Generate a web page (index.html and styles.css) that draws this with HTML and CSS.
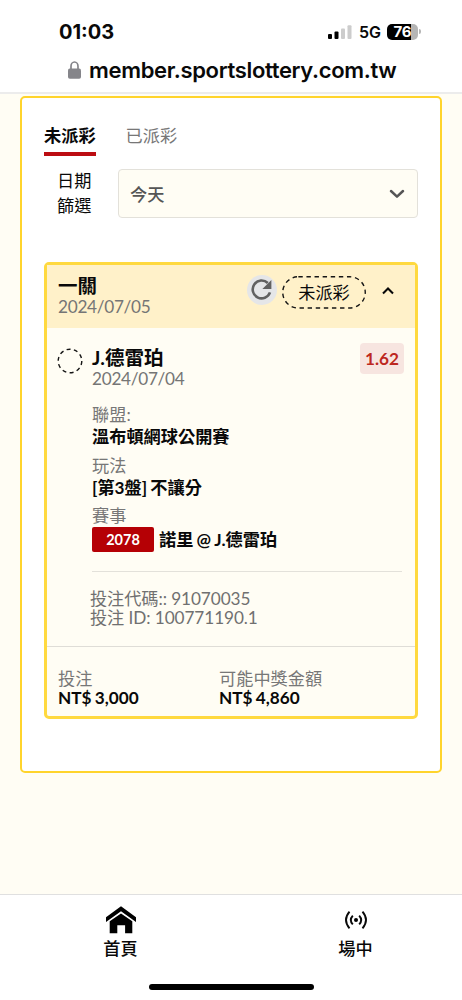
FILE: index.html
```html
<!DOCTYPE html>
<html lang="zh-Hant">
<head>
<meta charset="utf-8">
<meta name="viewport" content="width=device-width, initial-scale=1">
<title>投注紀錄</title>
<link rel="stylesheet" href="styles.css">
</head>
<body>
<header class="browser">
  <div class="status">
    <span class="time">01:03</span>
    <div class="status-right">
      <svg class="signal" width="24" height="16" viewBox="0 0 24 16"><rect x="0" y="10" width="4" height="5" rx="1"/><rect x="6.5" y="7.5" width="4" height="7.5" rx="1"/><rect class="off" x="13" y="4.5" width="4" height="10.5" rx="1"/><rect class="off" x="19.5" y="1.2" width="4" height="13.8" rx="1"/></svg>
      <span class="net">5G</span>
      <div class="battery"><span class="level">76</span><i class="cap"></i></div>
    </div>
  </div>
  <div class="address">
    <svg width="13" height="18" viewBox="0 0 13 18"><path class="shackle" d="M3 9V5.2a3.5 4.2 0 0 1 7 0V9"/><rect x="0" y="7.6" width="13" height="10.2" rx="1.8"/></svg>
    <span class="host">member.sportslottery.com.tw</span>
  </div>
</header>

<main class="page">
  <section class="panel">
    <nav class="tabs">
      <span class="tab active">未派彩</span>
      <span class="tab">已派彩</span>
    </nav>
    <div class="filter">
      <label class="filter-label">日期篩選</label>
      <div class="select"><span>今天</span>
        <svg width="16" height="10" viewBox="0 0 16 10"><path d="M2 2l6 5.6L14 2"/></svg>
      </div>
    </div>

    <article class="card">
      <header class="card-head">
        <div class="card-title">
          <h2>一關</h2>
          <p class="date">2024/07/05</p>
        </div>
        <span class="refresh"><svg width="22" height="22" viewBox="0 0 22 22"><path class="arc" d="M16.8 4A8.9 8.9 0 1 0 19 13.4"/><path class="tip" d="M20.4 1.1v9h-9z"/></svg></span>
        <span class="pill"><svg width="84" height="33" viewBox="0 0 84 33"><rect x=".75" y=".75" width="82.5" height="31.3" rx="15.6"/></svg><span>未派彩</span></span>
        <svg class="collapse" width="12" height="9" viewBox="0 0 12 9"><path d="M1 7.6l5-5 5 5"/></svg>
      </header>

      <div class="bet">
        <svg class="ring" width="26" height="26" viewBox="0 0 26 26"><circle cx="13" cy="13" r="11.8"/></svg>
        <div class="bet-body">
          <div class="pick">
            <div><h3>J.德雷珀</h3><p class="date">2024/07/04</p></div>
            <span class="odds">1.62</span>
          </div>
          <dl class="facts">
            <dt>聯盟:</dt><dd>溫布頓網球公開賽</dd>
            <dt>玩法</dt><dd>[第3盤] 不讓分</dd>
            <dt>賽事</dt><dd class="match"><span class="code">2078</span><span class="teams">諾里 @ J.德雷珀</span></dd>
          </dl>
          <div class="ids">
            <p>投注代碼:: 91070035</p>
            <p>投注 ID: 100771190.1</p>
          </div>
        </div>
      </div>

      <footer class="totals">
        <div><p>投注</p><strong>NT$ 3,000</strong></div>
        <div><p>可能中獎金額</p><strong>NT$ 4,860</strong></div>
      </footer>
    </article>
  </section>
</main>

<nav class="bottom">
  <div class="links">
    <a class="link"><svg width="32" height="28" viewBox="0 0 32 28"><path d="M1 11.3L16 .3l15 11v4.6L16 5.2 1 15.9z"/><path d="M4.7 15.2L16 7.4l11.3 7.8v12h-7.2v-8h-7.8v8H4.7z"/></svg><span>首頁</span></a>
    <a class="link"><svg class="live" width="24" height="28" viewBox="0 0 24 28"><circle cx="12" cy="14" r="2"/><path d="M8.8 9.6q-4 4.4 0 8.8M15.2 9.6q4 4.4 0 8.8M5.5 5.7q-7 8.3 0 16.6M18.5 5.7q7 8.3 0 16.6"/></svg><span>場中</span></a>
  </div>
  <div class="home-bar"></div>
</nav>
</body>
</html>
```

FILE: styles.css
```css
* { box-sizing: border-box; }
body {
  margin: 0;
  height: 1000px;
  display: flex;
  flex-direction: column;
  background: #fffdf4;
  color: #090909;
  font-family: Lato, "Noto Sans CJK TC", sans-serif;
  font-size: 17.2px;
}
h2, h3, p, dl, dd { margin: 0; }
svg { display: block; flex: none; }

.browser {
  height: 94px;
  background: #fff;
  border-bottom: 2px solid #ececec;
  font-family: Inter, sans-serif;
}
.status {
  height: 50px;
  padding: 13px 41px 0 59px;
  display: flex;
  justify-content: space-between;
  align-items: center;
}
.time { font-size: 20px; font-weight: 700; }
.status-right { display: flex; align-items: center; }
.signal { margin-right: 7px; }
.signal .off { fill: #ccc; }
.net { width: 28px; font-size: 16px; font-weight: 600; }
.battery { display: flex; align-items: center; gap: 1px; }
.level {
  width: 31px;
  height: 16px;
  border-radius: 5px;
  background: linear-gradient(90deg, #000 76%, #b5b5b5 76%);
  color: #fff;
  font-size: 15px;
  font-weight: 700;
  line-height: 16px;
  text-align: center;
}
.cap { width: 2px; height: 5px; border-radius: 0 2px 2px 0; background: #b5b5b5; }
.address {
  height: 40px;
  padding-left: 68px;
  display: flex;
  align-items: center;
  gap: 8px;
  fill: #85858a;
}
.shackle { fill: none; stroke: #85858a; stroke-width: 1.7; }
.host { font-size: 22px; font-weight: 600; white-space: nowrap; letter-spacing: -.33px; }

.page { flex: 1; padding: 2px 20px 0; }
.panel {
  height: 677px;
  padding: 25px 22px 0;
  border: 2px solid #ffd42c;
  border-radius: 5px;
  background: #fff;
}
.tabs { display: flex; gap: 30px; }
.tab { height: 33px; line-height: 26px; color: #777; }
.tab.active { color: #090909; font-weight: 700; border-bottom: 4px solid #bc0d12; }
.filter {
  margin-top: 13px;
  padding-left: 13px;
  display: flex;
  align-items: center;
  justify-content: space-between;
}
.filter-label { width: 35px; line-height: 24.5px; }
.select {
  width: 300px;
  height: 49px;
  padding: 0 12px 1px 11px;
  display: flex;
  align-items: center;
  justify-content: space-between;
  border: 1px solid #e3e1da;
  border-radius: 4px;
  background: #fffdf4;
  color: #555;
  font-weight: 500;
}
.select svg { margin-top: 1px; }
.select path { fill: none; stroke: #555; stroke-width: 2.5; stroke-linecap: round; stroke-linejoin: round; }

.card {
  height: 457px;
  margin-top: 44px;
  display: flex;
  flex-direction: column;
  border: 3px solid #ffd93f;
  border-radius: 5px;
  background: #fffdf4;
}
.card-head {
  height: 63px;
  padding: 10px 19px 0 11px;
  display: flex;
  align-items: flex-start;
  background: #fff1c9;
}
.card-title { width: 189px; }
h2, h3 { font-size: 19.5px; font-weight: 700; line-height: 21px; }
.date { color: #757575; line-height: 21px; letter-spacing: -.28px; }
.refresh {
  width: 30px;
  height: 30px;
  margin: 0 5px 0 0;
  border-radius: 50%;
  display: grid;
  place-items: center;
  background: #e5e6e8;
}
.arc { fill: none; stroke: #616161; stroke-width: 2.6; }
.tip { fill: #616161; }
.pill { display: grid; place-items: center; margin: 1px 16px 0 0; }
.pill > * { grid-area: 1 / 1; }
.pill > span { padding-top: 1px; line-height: 24px; }
.pill rect, .ring circle { fill: none; stroke: #151515; stroke-width: 1.4; }
.pill rect { stroke-dasharray: 4.4 3.7; }
.ring circle { stroke-dasharray: 4 3.4; }
.collapse { margin-top: 11px; }
.collapse path { fill: none; stroke: #080808; stroke-width: 2.1; }

.bet {
  height: 318px;
  padding: 19px 10px 0;
  display: flex;
  gap: 9px;
}
.bet-body { flex: 1; }
.ring { margin-top: 1px; }
.pick { display: flex; justify-content: space-between; align-items: flex-start; }
.odds {
  width: 44px;
  height: 31px;
  margin: -4px 1px 0 0;
  border-radius: 4px;
  background: #f7e5e0;
  color: #bd2720;
  font-weight: 700;
  line-height: 31px;
  text-align: center;
}
.facts { margin-top: 15px; word-spacing: -1px; }
.facts dt { height: 22px; line-height: 22px; color: #777; }
.facts dd { height: 20px; margin-bottom: 8.5px; line-height: 21px; font-weight: 700; }
.facts .match { height: 25px; margin: 0; display: flex; align-items: center; gap: 5px; }
.code {
  width: 62px;
  height: 25px;
  border-radius: 2px;
  background: #b50005;
  color: #fff;
  font-size: 14.5px;
  line-height: 25px;
  text-align: center;
}
.teams { line-height: 27px; }
.ids {
  width: 310px;
  margin-top: 19px;
  padding-top: 17px;
  border-top: 1px solid #e3e1da;
  color: #707070;
  line-height: 19px;
  letter-spacing: -.08px;
}
.ids p { margin-left: -2px; }
.totals {
  flex: 1;
  padding: 22px 11px 0;
  display: grid;
  grid-template-columns: 161px 1fr;
  border-top: 1px solid #dfddd7;
  color: #777;
  line-height: 19px;
}
.totals strong { display: block; color: #090909; word-spacing: -1px; }

.bottom { height: 106px; border-top: 1px solid #e0e0e0; background: #fff; }
.links { height: 89px; display: flex; justify-content: center; gap: 200px; padding-left: 14px; }
.link {
  width: 35px;
  padding-top: 11px;
  display: flex;
  flex-direction: column;
  align-items: center;
  font-weight: 500;
  line-height: 30px;
  white-space: nowrap;
}
.live path { fill: none; stroke: #090909; stroke-width: 1.9; }
.home-bar { width: 165px; height: 6px; margin: 0 auto; border-radius: 3px; background: #000; }
```
